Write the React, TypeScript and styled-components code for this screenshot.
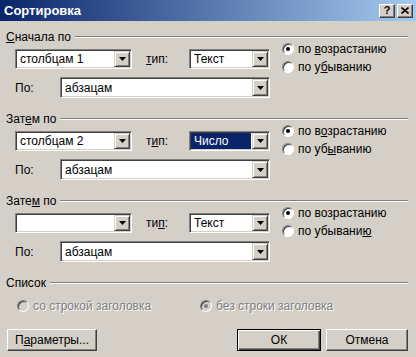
import React from 'react';
import styled, { createGlobalStyle, css } from 'styled-components';

const GlobalStyle = createGlobalStyle`
  html, body {
    margin: 0;
    padding: 0;
    background: #d4d0c8;
  }
  body {
    font-family: "Liberation Sans", Arial, sans-serif;
    font-size: 12px;
    color: #000;
  }
`;

const Window = styled.div`
  width: 416px;
  height: 357px;
  display: flex;
  flex-direction: column;
  background: #d4d0c8;
  overflow: hidden;
`;

const TitleBar = styled.div`
  height: 21px;
  flex: none;
  display: flex;
  align-items: center;
  padding: 0 3px 0 4px;
  background: linear-gradient(to right, #0a246a, #a6caf0);
`;

const Title = styled.div`
  flex: 1;
  color: #fff;
  font-weight: bold;
  font-size: 13px;
`;

const CaptionButton = styled.div`
  width: 16px;
  height: 14px;
  box-sizing: border-box;
  margin-left: 2px;
  background: #d4d0c8;
  border: 1px solid;
  border-color: #fff #404040 #404040 #fff;
  box-shadow: inset -1px -1px #808080;
  display: flex;
  align-items: center;
  justify-content: center;
  font-weight: bold;
  font-size: 11px;
  line-height: 1;
`;

const Body = styled.div`
  flex: 1;
  display: flex;
  flex-direction: column;
  padding: 9px 8px 0 6px;
`;

const Group = styled.section<{ $gap?: number }>`
  margin-top: ${p => p.$gap ?? 0}px;
`;

const GroupHeader = styled.div`
  display: flex;
  align-items: center;
  height: 14px;
  gap: 4px;
`;

const GroupLine = styled.div`
  flex: 1;
  height: 0;
  border-top: 1px solid #808080;
  border-bottom: 1px solid #fff;
`;

const SortBody = styled.div`
  display: flex;
  margin-top: 5px;
  padding-left: 9px;
`;

const LeftCol = styled.div`
  width: 255px;
  display: flex;
  flex-direction: column;
  gap: 8px;
`;

const Row = styled.div`
  display: flex;
  align-items: center;
`;

const FieldLabel = styled.span<{ $w: number; $indent?: number }>`
  width: ${p => p.$w}px;
  margin-left: ${p => p.$indent ?? 0}px;
  flex: none;
`;

const Key = styled.span`
  text-decoration: underline;
`;

const Combo = styled.div<{ $w: number; $h?: number }>`
  width: ${p => p.$w}px;
  height: ${p => p.$h ?? 20}px;
  flex: none;
  box-sizing: border-box;
  display: flex;
  background: #fff;
  border: 1px solid;
  border-color: #808080 #fff #fff #808080;
  box-shadow: inset 1px 1px #404040, inset -1px -1px #d4d0c8;
  padding: 1px;
`;

const ComboText = styled.div<{ $selected?: boolean }>`
  flex: 1;
  display: flex;
  align-items: center;
  padding-left: 3px;
  margin-right: 1px;
  white-space: nowrap;
  overflow: hidden;
  ${p =>
    p.$selected &&
    css`
      background: #0a246a;
      color: #fff;
    `}
`;

const DropButton = styled.div`
  width: 16px;
  flex: none;
  box-sizing: border-box;
  background: #d4d0c8;
  border: 1px solid;
  border-color: #d4d0c8 #404040 #404040 #d4d0c8;
  box-shadow: inset 1px 1px #fff, inset -1px -1px #808080;
  display: flex;
  align-items: center;
  justify-content: center;
`;

const RadioCol = styled.div`
  margin-left: 12px;
  margin-top: -9px;
  display: flex;
  flex-direction: column;
`;

const RadioItem = styled.label<{ $disabled?: boolean; $w?: number }>`
  height: 18px;
  display: flex;
  align-items: center;
  gap: 4px;
  ${p => p.$w && css`width: ${p.$w}px;`}
  ${p =>
    p.$disabled &&
    css`
      color: #808080;
      text-shadow: 1px 1px #fff;
    `}
`;

const RadioCircle = styled.span<{ $checked?: boolean; $disabled?: boolean }>`
  position: relative;
  flex: none;
  width: 12px;
  height: 12px;
  box-sizing: border-box;
  border-radius: 50%;
  background: ${p => (p.$disabled ? '#d4d0c8' : '#fff')};
  border: 1px solid;
  border-color: #808080 #fff #fff #808080;
  box-shadow: inset 1px 1px #404040;

  &::after {
    content: '';
    display: ${p => (p.$checked ? 'block' : 'none')};
    position: absolute;
    left: 3px;
    top: 3px;
    width: 4px;
    height: 4px;
    border-radius: 50%;
    background: ${p => (p.$disabled ? '#808080' : '#000')};
  }
`;

const ListRow = styled.div`
  display: flex;
  margin-top: 7px;
  padding-left: 11px;
`;

const ButtonRow = styled.div`
  display: flex;
  align-items: center;
  gap: 5px;
  margin-top: 14px;
  padding-left: 1px;
`;

const Spacer = styled.div`
  flex: 1;
`;

const Button = styled.button<{ $w: number; $default?: boolean }>`
  width: ${p => p.$w}px;
  height: 22px;
  box-sizing: border-box;
  padding: 0;
  font: inherit;
  color: #000;
  background: #d4d0c8;
  border: 1px solid;
  border-color: #fff #404040 #404040 #fff;
  box-shadow: inset -1px -1px #808080;
  ${p =>
    p.$default &&
    css`
      border: 1px solid #000;
      box-shadow: inset 1px 1px #fff, inset -1px -1px #404040, inset -2px -2px #808080;
    `}
`;

const Arrow = () => (
  <svg width="7" height="4" viewBox="0 0 7 4">
    <polygon points="0,0 7,0 3.5,4" fill="#000" />
  </svg>
);

const CloseGlyph = () => (
  <svg width="8" height="7" viewBox="0 0 8 7">
    <path d="M0.5 0.5 L7.5 6.5 M7.5 0.5 L0.5 6.5" stroke="#000" strokeWidth="1.6" />
  </svg>
);

type ComboProps = { width: number; height?: number; value: string; selected?: boolean };

const ComboBox = ({ width, height, value, selected }: ComboProps) => (
  <Combo $w={width} $h={height}>
    <ComboText $selected={selected}>{value}</ComboText>
    <DropButton>
      <Arrow />
    </DropButton>
  </Combo>
);

type Radio = { label: React.ReactNode; checked?: boolean };

type SortSection = {
  title: React.ReactNode;
  column: string;
  type: React.ReactNode;
  typeValue: string;
  typeSelected?: boolean;
  asc: React.ReactNode;
  desc: React.ReactNode;
};

const sections: SortSection[] = [
  {
    title: <><Key>С</Key>начала по</>,
    column: 'столбцам 1',
    type: <><Key>т</Key>ип:</>,
    typeValue: 'Текст',
    asc: <>по <Key>в</Key>озрастанию</>,
    desc: <>по у<Key>б</Key>ыванию</>,
  },
  {
    title: <>Зат<Key>е</Key>м по</>,
    column: 'столбцам 2',
    type: <>т<Key>и</Key>п:</>,
    typeValue: 'Число',
    typeSelected: true,
    asc: <>по в<Key>о</Key>зрастанию</>,
    desc: <>по уб<Key>ы</Key>ванию</>,
  },
  {
    title: <>Зате<Key>м</Key> по</>,
    column: '',
    type: <>ти<Key>п</Key>:</>,
    typeValue: 'Текст',
    asc: <>по возрастанию</>,
    desc: <>по убывани<Key>ю</Key></>,
  },
];

const RadioOption = ({ label, checked }: Radio) => (
  <RadioItem>
    <RadioCircle $checked={checked} />
    <span>{label}</span>
  </RadioItem>
);

export default function App() {
  return (
    <Window>
      <GlobalStyle />
      <TitleBar>
        <Title>Сортировка</Title>
        <CaptionButton>?</CaptionButton>
        <CaptionButton>
          <CloseGlyph />
        </CaptionButton>
      </TitleBar>
      <Body>
        {sections.map((s, i) => (
          <Group key={i} $gap={i === 0 ? 0 : 14}>
            <GroupHeader>
              <span>{s.title}</span>
              <GroupLine />
            </GroupHeader>
            <SortBody>
              <LeftCol>
                <Row>
                  <ComboBox width={117} value={s.column} />
                  <FieldLabel $w={43} $indent={14}>{s.type}</FieldLabel>
                  <ComboBox width={81} value={s.typeValue} selected={s.typeSelected} />
                </Row>
                <Row>
                  <FieldLabel $w={45}>По:</FieldLabel>
                  <ComboBox width={210} height={21} value="абзацам" />
                </Row>
              </LeftCol>
              <RadioCol>
                <RadioOption label={s.asc} checked />
                <RadioOption label={s.desc} />
              </RadioCol>
            </SortBody>
          </Group>
        ))}
        <Group $gap={14}>
          <GroupHeader>
            <span>Список</span>
            <GroupLine />
          </GroupHeader>
          <ListRow>
            <RadioItem $disabled $w={183}>
              <RadioCircle $disabled />
              <span>со строкой заголовка</span>
            </RadioItem>
            <RadioItem $disabled>
              <RadioCircle $disabled $checked />
              <span>без строки заголовка</span>
            </RadioItem>
          </ListRow>
        </Group>
        <ButtonRow>
          <Button $w={90}>
            П<Key>а</Key>раметры...
          </Button>
          <Spacer />
          <Button $w={84} $default>
            ОК
          </Button>
          <Button $w={82}>Отмена</Button>
        </ButtonRow>
      </Body>
    </Window>
  );
}
